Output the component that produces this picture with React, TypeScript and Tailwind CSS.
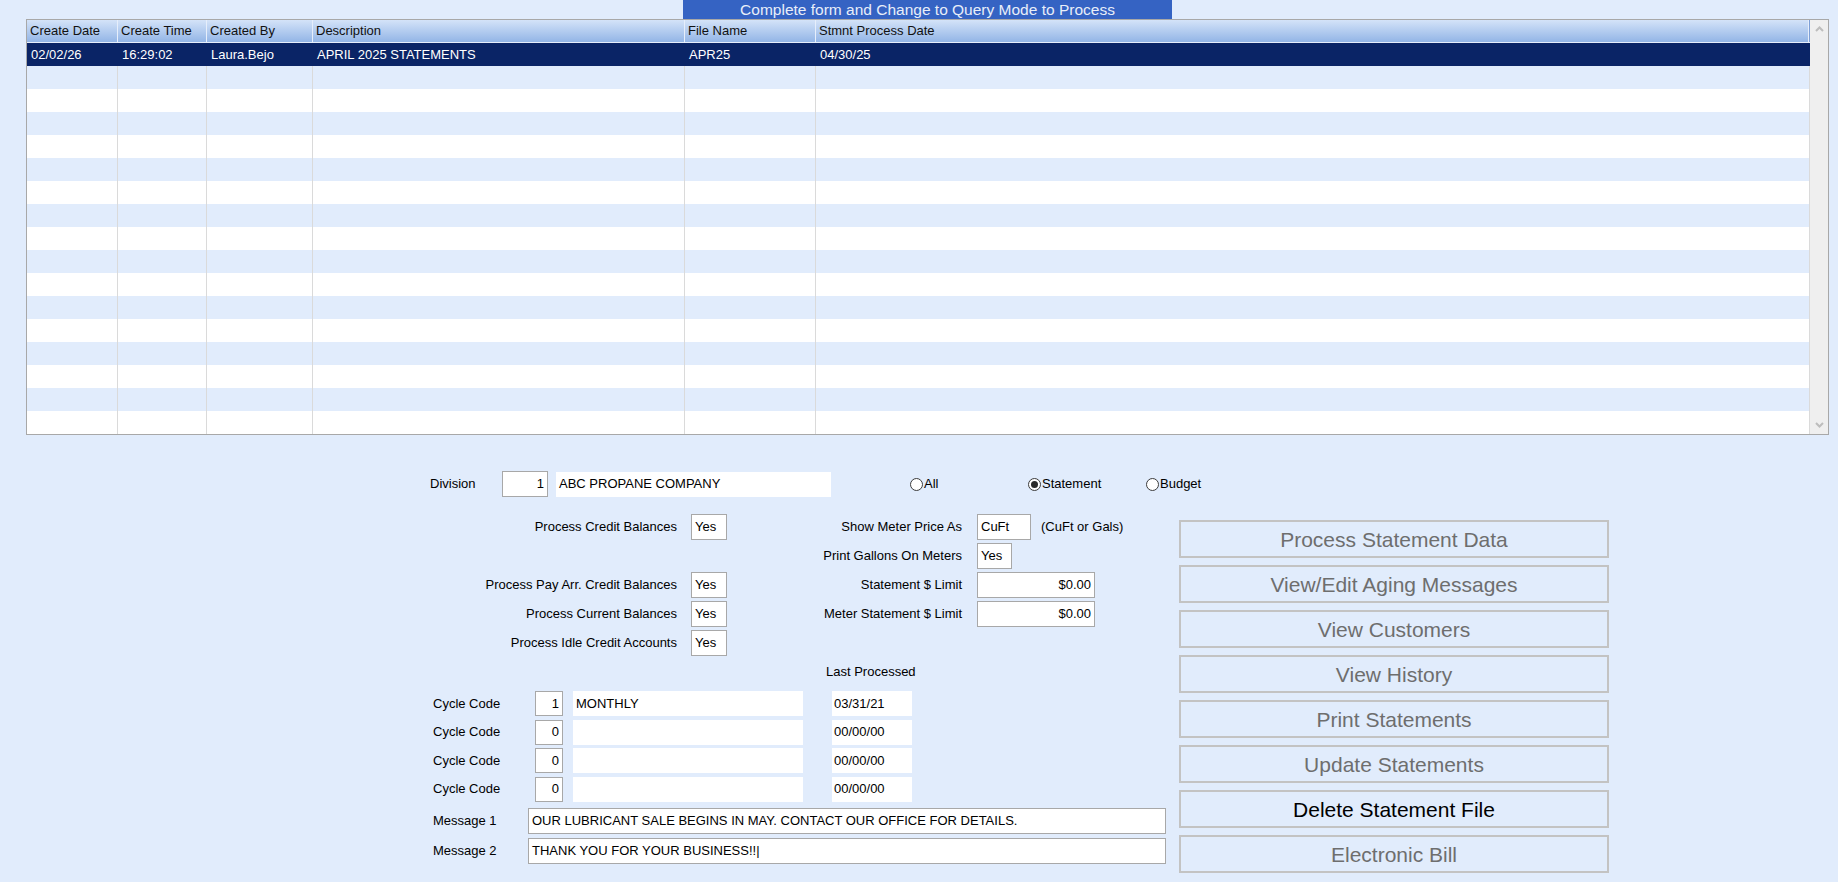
import React from 'react'

const font = "font-['Liberation_Sans',Arial,sans-serif]"

// grid columns: width classes for the statement file list
const columns = [
  { label: 'Create Date', w: 'w-[91px]' },
  { label: 'Create Time', w: 'w-[89px]' },
  { label: 'Created By', w: 'w-[106px]' },
  { label: 'Description', w: 'w-[372px]' },
  { label: 'File Name', w: 'w-[131px]' },
  { label: 'Stmnt Process Date', w: 'flex-1' },
]

const selectedRow = ['02/02/26', '16:29:02', 'Laura.Bejo', 'APRIL 2025 STATEMENTS', 'APR25', '04/30/25']

const buttons = [
  { label: 'Process Statement Data', enabled: false },
  { label: 'View/Edit Aging Messages', enabled: false },
  { label: 'View Customers', enabled: false },
  { label: 'View History', enabled: false },
  { label: 'Print Statements', enabled: false },
  { label: 'Update Statements', enabled: false },
  { label: 'Delete Statement File', enabled: true },
  { label: 'Electronic Bill', enabled: false },
]

const cycles = [
  { code: '1', name: 'MONTHLY', date: '03/31/21' },
  { code: '0', name: '', date: '00/00/00' },
  { code: '0', name: '', date: '00/00/00' },
  { code: '0', name: '', date: '00/00/00' },
]

function Radio({ label, checked }: { label: string; checked?: boolean }) {
  return (
    <div className="flex items-center gap-[1px]">
      <span className="w-[13px] h-[13px] rounded-full border border-[#3c3c3c] bg-white flex items-center justify-center">
        {checked && <span className="w-[7px] h-[7px] rounded-full bg-[#2a2a2a]" />}
      </span>
      <span>{label}</span>
    </div>
  )
}

function Box({ value, className, right }: { value: string; className: string; right?: boolean }) {
  return (
    <div
      className={`h-[26px] border border-[#a8a8a8] bg-white flex items-center px-[3px] ${
        right ? 'justify-end' : ''
      } ${className}`}
    >
      {value}
    </div>
  )
}

export default function App() {
  return (
    <div className={`w-[1838px] h-[882px] bg-[#e1ecfc] text-[13px] text-black overflow-hidden ${font}`}>
      {/* 타이틀 바 */}
      <div className="ml-[683px] w-[489px] h-[19px] bg-[#3563c3] text-[#e8eef9] text-[15.5px] leading-[19px] text-center">
        Complete form and Change to Query Mode to Process
      </div>

      {/* 목록 그리드 */}
      <div className="ml-[26px] mr-[9px] h-[416px] border border-[#a8a8a8] bg-white flex overflow-hidden">
        <div className="flex-1 flex flex-col overflow-hidden">
          <div className="flex h-[22px] bg-gradient-to-b from-[#d4e3f8] to-[#93b5e6] border-r border-[#7d9fd6]">
            {columns.map((c) => (
              <div
                key={c.label}
                className={`${c.w} h-full pl-[3px] flex items-center border-r border-[#e6eefb] text-[#111]`}
              >
                {c.label}
              </div>
            ))}
          </div>
          <div className="h-[2px] bg-[#e6eefb]" />
          <div className="flex h-[23px] bg-[#0a2466] text-white">
            {columns.map((c, i) => (
              <div key={c.label} className={`${c.w} h-full pl-[4px] flex items-center`}>
                {selectedRow[i]}
              </div>
            ))}
          </div>
          {Array.from({ length: 16 }).map((_, r) => (
            <div key={r} className={`flex h-[23px] shrink-0 ${r % 2 === 0 ? 'bg-[#e1ecfc]' : 'bg-white'}`}>
              {columns.map((c) => (
                <div key={c.label} className={`${c.w} h-full border-r border-[#dadada]`} />
              ))}
            </div>
          ))}
        </div>
        {/* 스크롤바 */}
        <div className="w-[18px] bg-[#efefef] flex flex-col items-center justify-between py-[6px]">
          <svg width="9" height="6" viewBox="0 0 9 6">
            <polyline points="1,5 4.5,1.5 8,5" fill="none" stroke="#bdbdbd" strokeWidth="2" />
          </svg>
          <svg width="9" height="6" viewBox="0 0 9 6">
            <polyline points="1,1 4.5,4.5 8,1" fill="none" stroke="#bdbdbd" strokeWidth="2" />
          </svg>
        </div>
      </div>

      {/* 입력 폼 */}
      <div className="pl-[430px] pt-[35px]">
        {/* Division 행 */}
        <div className="flex items-center h-[28px]">
          <span className="w-[72px]">Division</span>
          <Box value="1" right className="w-[46px]" />
          <div className="ml-[8px] w-[275px] h-[25px] bg-white flex items-center px-[3px]">ABC PROPANE COMPANY</div>
          <div className="ml-[79px] w-[118px]">
            <Radio label="All" />
          </div>
          <div className="w-[118px]">
            <Radio label="Statement" checked />
          </div>
          <Radio label="Budget" />
        </div>

        <div className="flex mt-[16px]">
          <div className="w-[749px] flex flex-col">
            <div className="grid grid-cols-[261px_36px_250px_1fr] grid-rows-[26px_26px_26px_26px_26px] gap-y-[3px]">
              <div className="text-right pr-[14px] flex items-center justify-end">Process Credit Balances</div>
              <Box value="Yes" className="w-[36px]" />
              <div className="pr-[15px] flex items-center justify-end">Show Meter Price As</div>
              <div className="flex items-center">
                <Box value="CuFt" className="w-[54px]" />
                <span className="ml-[10px]">(CuFt or Gals)</span>
              </div>

              <div />
              <div />
              <div className="pr-[15px] flex items-center justify-end">Print Gallons On Meters</div>
              <div>
                <Box value="Yes" className="w-[35px]" />
              </div>

              <div className="pr-[14px] flex items-center justify-end">Process Pay Arr. Credit Balances</div>
              <Box value="Yes" className="w-[36px]" />
              <div className="pr-[15px] flex items-center justify-end">Statement $ Limit</div>
              <div>
                <Box value="$0.00" right className="w-[118px]" />
              </div>

              <div className="pr-[14px] flex items-center justify-end">Process Current Balances</div>
              <Box value="Yes" className="w-[36px]" />
              <div className="pr-[15px] flex items-center justify-end">Meter Statement $ Limit</div>
              <div>
                <Box value="$0.00" right className="w-[118px]" />
              </div>

              <div className="pr-[14px] flex items-center justify-end">Process Idle Credit Accounts</div>
              <Box value="Yes" className="w-[36px]" />
              <div />
              <div />
            </div>

            <div className="mt-[8px] h-[16px] pl-[396px] flex items-center">Last Processed</div>

            <div className="mt-[11px] flex flex-col gap-[3.5px]">
              {cycles.map((c, i) => (
                <div key={i} className="flex items-center h-[25px] pl-[3px]">
                  <span className="w-[102px]">Cycle Code</span>
                  <Box value={c.code} right className="w-[28px] !h-[25px]" />
                  <div className="ml-[10px] w-[230px] h-[25px] bg-white flex items-center px-[3px]">{c.name}</div>
                  <div className="ml-[29px] w-[80px] h-[25px] bg-white flex items-center px-[2px]">{c.date}</div>
                </div>
              ))}
            </div>

            <div className="mt-[6px] flex flex-col gap-[4px]">
              <div className="flex items-center h-[26px] pl-[3px]">
                <span className="w-[95px]">Message 1</span>
                <Box value="OUR LUBRICANT SALE BEGINS IN MAY. CONTACT OUR OFFICE FOR DETAILS." className="w-[638px]" />
              </div>
              <div className="flex items-center h-[26px] pl-[3px]">
                <span className="w-[95px]">Message 2</span>
                <Box value="THANK YOU FOR YOUR BUSINESS!!|" className="w-[638px]" />
              </div>
            </div>
          </div>

          {/* 버튼 */}
          <div className="mt-[6px] w-[430px] flex flex-col gap-[7px]">
            {buttons.map((b) => (
              <button
                key={b.label}
                className={`h-[38px] border-2 border-[#c3c3c3] text-[21px] leading-none ${
                  b.enabled ? 'text-black' : 'text-[#6e6e6e]'
                }`}
              >
                {b.label}
              </button>
            ))}
          </div>
        </div>
      </div>
    </div>
  )
}
